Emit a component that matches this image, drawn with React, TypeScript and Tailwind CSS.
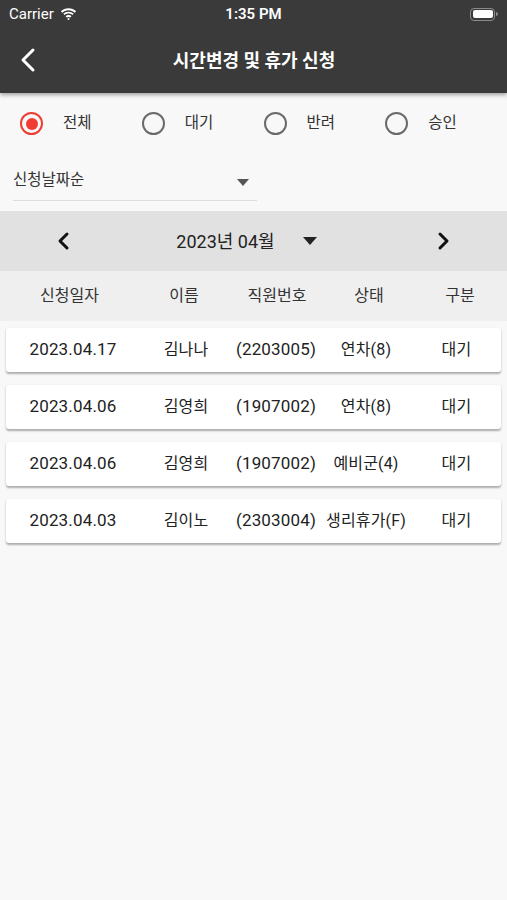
import { useState } from 'react';

const rows = [
  { date: '2023.04.17', name: '김나나', id: '(2203005)', kind: '연차(8)', state: '대기' },
  { date: '2023.04.06', name: '김영희', id: '(1907002)', kind: '연차(8)', state: '대기' },
  { date: '2023.04.06', name: '김영희', id: '(1907002)', kind: '예비군(4)', state: '대기' },
  { date: '2023.04.03', name: '김이노', id: '(2303004)', kind: '생리휴가(F)', state: '대기' },
];

const filters = ['전체', '대기', '반려', '승인'];

const font = { fontFamily: 'Roboto, "Noto Sans CJK KR", sans-serif' };

const App = () => {
  const [filter, setFilter] = useState('전체');

  return (
    <div className="min-h-[900px] w-[507px] bg-[#f8f8f8] text-[#222]" style={font}>
      {/* Header */}
      <div className="bg-[#3a3a3a] shadow-[0_2px_4px_rgba(0,0,0,0.35)] relative z-10">
        <div className="h-[28px] flex items-center justify-between px-[9px] text-white text-[15px]">
          <div className="flex items-center gap-[6px] w-[120px]">
            <span>Carrier</span>
            <svg width="17" height="12" viewBox="0 0 17 12" fill="white">
              <path d="M8.5 2.2c2.4 0 4.6.9 6.3 2.5l1.3-1.4C14.1 1.3 11.4.2 8.5.2S2.9 1.3.9 3.3l1.3 1.4C3.9 3.1 6.1 2.2 8.5 2.2z" />
              <path d="M8.5 5.6c1.5 0 2.8.5 3.9 1.5l1.3-1.4c-1.4-1.3-3.2-2-5.2-2s-3.8.7-5.2 2l1.3 1.4c1.1-1 2.4-1.5 3.9-1.5z" />
              <path d="M8.5 9c.6 0 1.2.2 1.6.6l1.4-1.4c-.8-.7-1.800-1.2-3-1.2s-2.2.5-3 1.2l1.4 1.4c.4-.4 1-.6 1.6-.6z" />
              <circle cx="8.5" cy="11" r="1" />
            </svg>
          </div>
          <span className="font-semibold">1:35 PM</span>
          <div className="w-[120px] flex justify-end">
            <div className="flex items-center">
              <div className="w-[25px] h-[13px] rounded-[4px] border border-[#8a8a8a] p-[1.5px]">
                <div className="w-full h-full bg-white rounded-[2px]" />
              </div>
              <div className="w-[2px] h-[4px] bg-[#8a8a8a] rounded-r-sm ml-[1px]" />
            </div>
          </div>
        </div>
        <div className="h-[65px] flex items-center relative">
          <button className="absolute left-[18px] top-[19px]">
            <svg width="20" height="26" viewBox="0 0 20 26" fill="none" stroke="white" strokeWidth="3" strokeLinecap="round" strokeLinejoin="round">
              <path d="M15 3 L5 13 L15 23" />
            </svg>
          </button>
          <h1 className="flex-1 text-center text-white text-[18px] font-bold pl-[1px]">시간변경 및 휴가 신청</h1>
        </div>
      </div>

      {/* Radio filters */}
      <div className="flex items-center h-[60px] pl-[20px] pt-[1px]">
        {filters.map((f) => {
          const on = filter === f;
          return (
            <button key={f} className="w-[123px] flex items-center gap-[20px]" onClick={() => setFilter(f)}>
              <span
                className={`w-[23px] h-[23px] rounded-full border-[2.5px] flex items-center justify-center ${
                  on ? 'border-[#f03c33]' : 'border-[#6a6a6a]'
                }`}
              >
                {on && <span className="w-[12px] h-[12px] rounded-full bg-[#f03c33]" />}
              </span>
              <span className="text-[15.5px] text-[#333]">{f}</span>
            </button>
          );
        })}
      </div>

      {/* Sort dropdown */}
      <div className="px-[13px] pb-[10px]">
        <div className="w-[244px] h-[48px] flex items-center justify-between border-b border-[#dcdcdc] pt-[9px]">
          <span className="text-[15.5px] text-[#333]">신청날짜순</span>
          <svg width="12" height="7" viewBox="0 0 12 7" className="mr-[8px] mt-[2px]">
            <path d="M0 0 L12 0 L6 7 Z" fill="#555" />
          </svg>
        </div>
      </div>

      {/* Month selector */}
      <div className="h-[60px] bg-[#e1e1e1] flex items-center justify-between px-[57px]">
        <svg width="14" height="20" viewBox="0 0 14 20" fill="none" stroke="#111" strokeWidth="3" strokeLinecap="round" strokeLinejoin="round">
          <path d="M10 3 L3 10 L10 17" />
        </svg>
        <div className="flex items-center gap-[28px] ml-[52px]">
          <span className="text-[18px] text-[#222]">2023년 04월</span>
          <svg width="14" height="8" viewBox="0 0 14 8">
            <path d="M0 0 L14 0 L7 8 Z" fill="#222" />
          </svg>
        </div>
        <div className="w-[80px] flex justify-end">
          <svg width="14" height="20" viewBox="0 0 14 20" fill="none" stroke="#111" strokeWidth="3" strokeLinecap="round" strokeLinejoin="round">
            <path d="M4 3 L11 10 L4 17" />
          </svg>
        </div>
      </div>

      {/* Table header */}
      <div className="h-[50px] bg-[#efefef] grid grid-cols-[139px_90px_96px_88px_94px] items-center text-[16px] text-[#333] text-center">
        <span>신청일자</span>
        <span>이름</span>
        <span>직원번호</span>
        <span>상태</span>
        <span>구분</span>
      </div>

      {/* Rows */}
      <div className="flex flex-col gap-[13px] px-[6px] pt-[7px]">
        {rows.map((r, i) => (
          <div
            key={i}
            className="h-[44px] bg-white rounded-[3px] shadow-[0_1.5px_2px_rgba(0,0,0,0.3)] grid grid-cols-[134px_92px_88px_92px_89px] items-center text-[17px] text-[#222] text-center tracking-[0.01em]"
          >
            <span>{r.date}</span>
            <span className="text-[16px]">{r.name}</span>
            <span className="whitespace-nowrap">{r.id}</span>
            <span className="whitespace-nowrap text-[16px]">{r.kind}</span>
            <span className="text-[16px]">{r.state}</span>
          </div>
        ))}
      </div>
    </div>
  );
};

export default App;
